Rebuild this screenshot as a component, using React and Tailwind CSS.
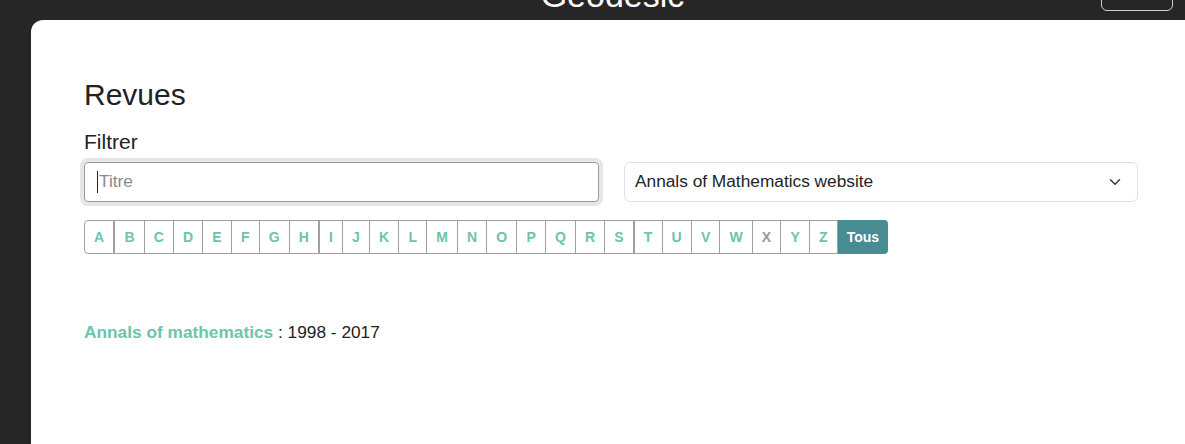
import React from "react";

const letters = "ABCDEFGHIJKLMNOPQRSTUVWXYZ".split("");
const thick = new Set(["B", "I", "T"]);

export default function App() {
  return (
    <div
      className="w-[1185px] h-[444px] overflow-hidden bg-[#262626] flex flex-col"
      style={{ fontFamily: '"Liberation Sans", Arial, sans-serif' }}
    >
      <header className="h-[20px] overflow-hidden flex items-start shrink-0">
        <div className="flex-1 pl-[124px] text-center">
          <div className="-mt-[22px] text-[34px] leading-[34px] text-white">Geodesic</div>
        </div>
        <div className="w-[72px] h-[40px] -mt-[29px] mr-[12px] rounded-[6px] border border-[#d0d0d0]"></div>
      </header>
      <main className="flex-1 ml-[31px] bg-white rounded-tl-[12px] pl-[53px] pr-[47px] pt-[57px]">
        <h1 className="text-[30px] leading-[36px] text-[#222]">Revues</h1>
        <div className="mt-[17px] text-[21px] leading-[24px] text-[#222]">Filtrer</div>
        <div className="mt-[8px] grid grid-cols-[515px_514px] gap-[25px]">
          <div className="rounded-[4px] shadow-[0_0_0_4px_#e6e6e6]">
            <div className="h-[40px] rounded-[4px] border border-[#9a9a9a] bg-white flex items-center pl-[12px]">
              <span className="w-px h-[22px] bg-[#222] mr-[1px]"></span>
              <span className="text-[17.3px] text-[#8a8a8a]">Titre</span>
            </div>
          </div>
          <div className="h-[40px] rounded-[6px] border border-[#dee2e6] flex items-center pl-[10px] pr-[16px] text-[17.3px] text-[#212529]">
            <span className="flex-1">Annals of Mathematics website</span>
            <svg width="12" height="12" viewBox="0 0 16 16" fill="none" stroke="#343a40" strokeWidth="2" strokeLinecap="round" strokeLinejoin="round">
              <path d="M2 5l6 6 6-6" />
            </svg>
          </div>
        </div>
        <div className="mt-[18px] flex">
          {letters.map((l, i) => (
            <div
              key={l}
              className={
                "h-[34px] px-[9.1px] flex items-center border-y border-r border-[#a0a0a0] text-[14px] font-bold " +
                (l === "X" ? "text-[#9a9a9a] " : "text-[#6dc4a9] ") +
                (i === 0 ? "border-l rounded-l-[4px] " : "") +
                (thick.has(l) ? "border-l " : "")
              }
            >
              {l}
            </div>
          ))}
          <div className="h-[34px] px-[9.1px] flex items-center bg-[#478c92] text-white text-[14px] font-bold rounded-r-[4px]">
            Tous
          </div>
        </div>
        <div className="mt-[66px] text-[17.3px] leading-[24px] text-[#222]">
          <span className="font-bold text-[#6dc4a9]">Annals of mathematics</span> : 1998 - 2017
        </div>
      </main>
    </div>
  );
}
